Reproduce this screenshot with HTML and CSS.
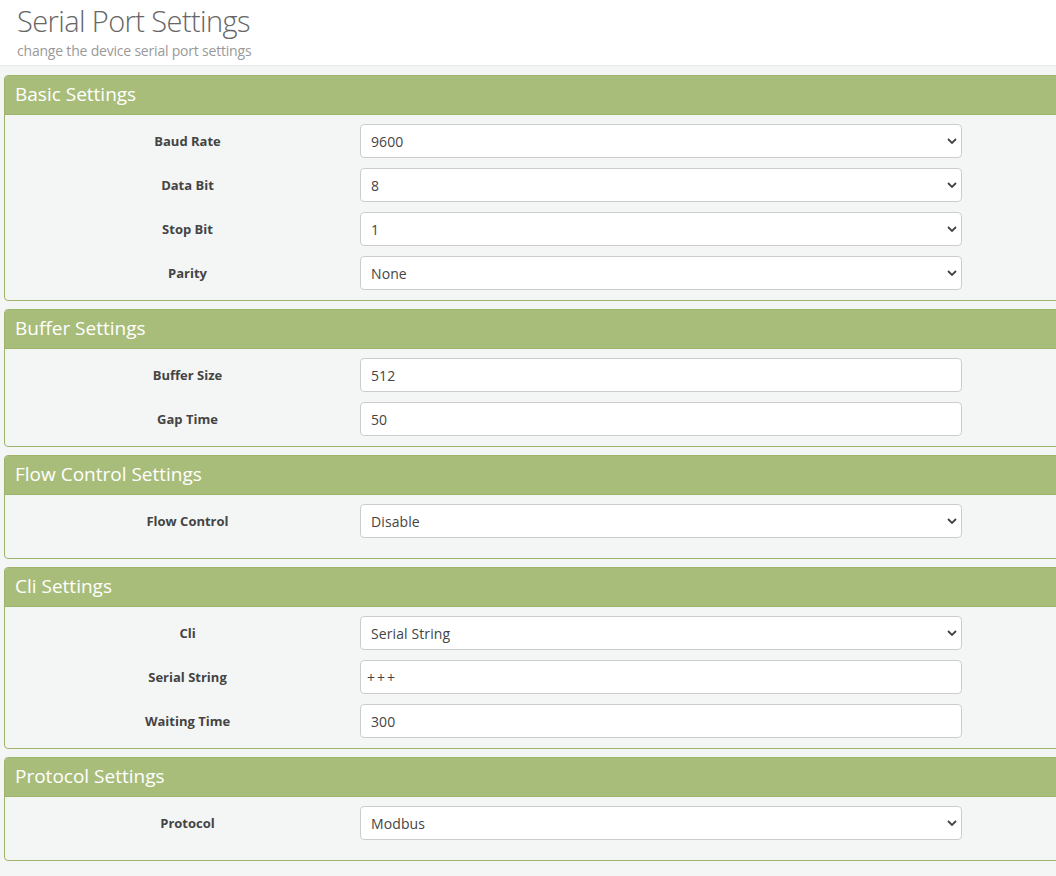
FILE: index.html
```html
<!DOCTYPE html>
<html lang="en">
<head>
<meta charset="utf-8">
<title>Serial Port Settings</title>
<link rel="stylesheet" href="styles.css">
</head>
<body>
<header class="page-head">
  <h1 class="page-title">Serial Port Settings</h1>
  <p class="page-sub">change the device serial port settings</p>
</header>
<main class="content">
  <section class="panel">
    <h2 class="panel-title">Basic Settings</h2>
    <div class="panel-body">
      <div class="form-row">
        <label class="form-label">Baud Rate</label>
        <div class="field"><select class="control"><option>9600</option></select><svg class="chev" viewBox="0 0 10 6"><path d="M1 1 L5 5 L9 1" fill="none" stroke="#444" stroke-width="1.8"/></svg></div>
      </div>
      <div class="form-row">
        <label class="form-label">Data Bit</label>
        <div class="field"><select class="control"><option>8</option></select><svg class="chev" viewBox="0 0 10 6"><path d="M1 1 L5 5 L9 1" fill="none" stroke="#444" stroke-width="1.8"/></svg></div>
      </div>
      <div class="form-row">
        <label class="form-label">Stop Bit</label>
        <div class="field"><select class="control"><option>1</option></select><svg class="chev" viewBox="0 0 10 6"><path d="M1 1 L5 5 L9 1" fill="none" stroke="#444" stroke-width="1.8"/></svg></div>
      </div>
      <div class="form-row">
        <label class="form-label">Parity</label>
        <div class="field"><select class="control"><option>None</option></select><svg class="chev" viewBox="0 0 10 6"><path d="M1 1 L5 5 L9 1" fill="none" stroke="#444" stroke-width="1.8"/></svg></div>
      </div>
    </div>
  </section>

  <section class="panel">
    <h2 class="panel-title">Buffer Settings</h2>
    <div class="panel-body">
      <div class="form-row">
        <label class="form-label">Buffer Size</label>
        <div class="field"><input class="control" type="text" value="512"></div>
      </div>
      <div class="form-row">
        <label class="form-label">Gap Time</label>
        <div class="field"><input class="control" type="text" value="50"></div>
      </div>
    </div>
  </section>

  <section class="panel">
    <h2 class="panel-title">Flow Control Settings</h2>
    <div class="panel-body single">
      <div class="form-row">
        <label class="form-label">Flow Control</label>
        <div class="field"><select class="control"><option>Disable</option></select><svg class="chev" viewBox="0 0 10 6"><path d="M1 1 L5 5 L9 1" fill="none" stroke="#444" stroke-width="1.8"/></svg></div>
      </div>
    </div>
  </section>

  <section class="panel">
    <h2 class="panel-title">Cli Settings</h2>
    <div class="panel-body">
      <div class="form-row">
        <label class="form-label">Cli</label>
        <div class="field"><select class="control"><option>Serial String</option></select><svg class="chev" viewBox="0 0 10 6"><path d="M1 1 L5 5 L9 1" fill="none" stroke="#444" stroke-width="1.8"/></svg></div>
      </div>
      <div class="form-row">
        <label class="form-label">Serial String</label>
        <div class="field"><input class="control spaced" type="text" value="+++"></div>
      </div>
      <div class="form-row">
        <label class="form-label">Waiting Time</label>
        <div class="field"><input class="control" type="text" value="300"></div>
      </div>
    </div>
  </section>

  <section class="panel">
    <h2 class="panel-title">Protocol Settings</h2>
    <div class="panel-body single">
      <div class="form-row">
        <label class="form-label">Protocol</label>
        <div class="field"><select class="control"><option>Modbus</option></select><svg class="chev" viewBox="0 0 10 6"><path d="M1 1 L5 5 L9 1" fill="none" stroke="#444" stroke-width="1.8"/></svg></div>
      </div>
    </div>
  </section>
</main>
</body>
</html>
```

FILE: styles.css
```css
html, body {
  margin: 0;
  padding: 0;
}
body {
  background: #f4f6f5;
  font-family: "Open Sans", "Noto Sans", "DejaVu Sans", sans-serif;
  color: #444;
  overflow: hidden;
  width: 1056px;
  height: 876px;
}
.page-head {
  background: #fff;
  height: 66px;
  border-bottom: 1px solid #e8e8e8;
  padding: 0 17px;
  box-sizing: border-box;
}
.page-title {
  margin: 0;
  padding-top: 2px;
  font-size: 29px;
  font-weight: 300;
  line-height: 38px;
  color: #666;
  letter-spacing: -0.6px;
}
.page-sub {
  margin: 2px 0 0;
  font-size: 14px;
  line-height: 18px;
  color: #999;
  letter-spacing: -0.2px;
}
.content {
  padding: 9px 0 0 4px;
  display: flex;
  flex-direction: column;
  gap: 8px;
}
.panel {
  width: 1090px;
  border: 1px solid #9db46a;
  border-radius: 4px;
  background: #f4f6f5;
  overflow: hidden;
}
.panel-title {
  margin: 0;
  background: #a9bd7b;
  color: #fff;
  font-size: 19px;
  font-weight: 400;
  height: 38px;
  line-height: 37px;
  padding: 0 10px;
  border-bottom: 1px solid #9db46a;
}
.panel-body {
  padding: 9px 0 0 0;
}
.panel-body.single {
  padding-bottom: 10px;
}
.form-row {
  display: flex;
  align-items: center;
  margin-bottom: 10px;
}
.form-label {
  width: 345px;
  margin-left: 10px;
  text-align: center;
  font-size: 13px;
  font-weight: 700;
  color: #444;
}
.field {
  position: relative;
  width: 602px;
}
.control {
  display: block;
  width: 100%;
  height: 34px;
  box-sizing: border-box;
  border: 1px solid #ccc;
  border-radius: 4px;
  background: #fff;
  padding: 0 10px;
  font-family: "Open Sans", "Noto Sans", "DejaVu Sans", sans-serif;
  font-size: 14px;
  color: #444;
  appearance: none;
  -webkit-appearance: none;
  outline: none;
  letter-spacing: 0.1px;
}
.control.spaced {
  letter-spacing: 2px;
  padding-left: 6px;
}
.chev {
  position: absolute;
  right: 5px;
  top: 14px;
  width: 10px;
  height: 6px;
  pointer-events: none;
}
```
